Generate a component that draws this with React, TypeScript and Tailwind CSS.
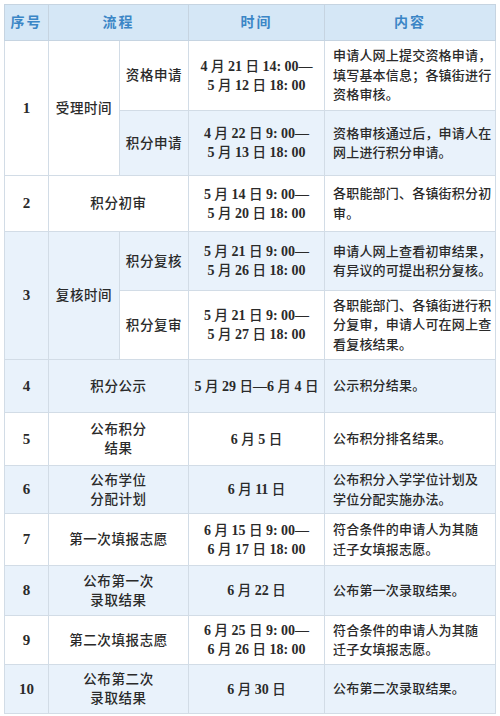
import React from "react";

type Cell = {
  text: string[];
  rowSpan?: number;
  colSpan?: number;
  blue?: boolean;
  kind?: "num" | "name" | "time" | "desc";
};

type Row = { h: string; cells: Cell[] };

const rows: Row[] = [
  {
    h: "h-[70px]",
    cells: [
      { text: ["1"], rowSpan: 2, kind: "num" },
      { text: ["受理时间"], rowSpan: 2 },
      { text: ["资格申请"] },
      { text: ["4 月 21 日 14: 00—", "5 月 12 日 18: 00"], kind: "time" },
      { text: ["申请人网上提交资格申请，", "填写基本信息；各镇街进行", "资格审核。"], kind: "desc" },
    ],
  },
  {
    h: "h-[65px]",
    cells: [
      { text: ["积分申请"], blue: true },
      { text: ["4 月 22 日 9: 00—", "5 月 13 日 18: 00"], blue: true, kind: "time" },
      { text: ["资格审核通过后，申请人在", "网上进行积分申请。"], blue: true, kind: "desc" },
    ],
  },
  {
    h: "h-[56px]",
    cells: [
      { text: ["2"], kind: "num" },
      { text: ["积分初审"], colSpan: 2 },
      { text: ["5 月 14 日 9: 00—", "5 月 20 日 18: 00"], kind: "time" },
      { text: ["各职能部门、各镇街积分初", "审。"], kind: "desc" },
    ],
  },
  {
    h: "h-[59px]",
    cells: [
      { text: ["3"], rowSpan: 2, blue: true, kind: "num" },
      { text: ["复核时间"], rowSpan: 2, blue: true },
      { text: ["积分复核"], blue: true },
      { text: ["5 月 21 日 9: 00—", "5 月 26 日 18: 00"], blue: true, kind: "time" },
      { text: ["申请人网上查看初审结果，", "有异议的可提出积分复核。"], blue: true, kind: "desc" },
    ],
  },
  {
    h: "h-[69px]",
    cells: [
      { text: ["积分复审"] },
      { text: ["5 月 21 日 9: 00—", "5 月 27 日 18: 00"], kind: "time" },
      { text: ["各职能部门、各镇街进行积", "分复审，申请人可在网上查", "看复核结果。"], kind: "desc" },
    ],
  },
  {
    h: "h-[53px]",
    cells: [
      { text: ["4"], blue: true, kind: "num" },
      { text: ["积分公示"], colSpan: 2, blue: true },
      { text: ["5 月 29 日—6 月 4 日"], blue: true, kind: "time" },
      { text: ["公示积分结果。"], blue: true, kind: "desc" },
    ],
  },
  {
    h: "h-[53px]",
    cells: [
      { text: ["5"], kind: "num" },
      { text: ["公布积分", "结果"], colSpan: 2 },
      { text: ["6 月 5 日"], kind: "time" },
      { text: ["公布积分排名结果。"], kind: "desc" },
    ],
  },
  {
    h: "h-[48px]",
    cells: [
      { text: ["6"], blue: true, kind: "num" },
      { text: ["公布学位", "分配计划"], colSpan: 2, blue: true },
      { text: ["6 月 11 日"], blue: true, kind: "time" },
      { text: ["公布积分入学学位计划及", "学位分配实施办法。"], blue: true, kind: "desc" },
    ],
  },
  {
    h: "h-[52px]",
    cells: [
      { text: ["7"], kind: "num" },
      { text: ["第一次填报志愿"], colSpan: 2 },
      { text: ["6 月 15 日 9: 00—", "6 月 17 日 18: 00"], kind: "time" },
      { text: ["符合条件的申请人为其随", "迁子女填报志愿。"], kind: "desc" },
    ],
  },
  {
    h: "h-[50px]",
    cells: [
      { text: ["8"], blue: true, kind: "num" },
      { text: ["公布第一次", "录取结果"], colSpan: 2, blue: true },
      { text: ["6 月 22 日"], blue: true, kind: "time" },
      { text: ["公布第一次录取结果。"], blue: true, kind: "desc" },
    ],
  },
  {
    h: "h-[49px]",
    cells: [
      { text: ["9"], kind: "num" },
      { text: ["第二次填报志愿"], colSpan: 2 },
      { text: ["6 月 25 日 9: 00—", "6 月 26 日 18: 00"], kind: "time" },
      { text: ["符合条件的申请人为其随", "迁子女填报志愿。"], kind: "desc" },
    ],
  },
  {
    h: "h-[49px]",
    cells: [
      { text: ["10"], blue: true, kind: "num" },
      { text: ["公布第二次", "录取结果"], colSpan: 2, blue: true },
      { text: ["6 月 30 日"], blue: true, kind: "time" },
      { text: ["公布第二次录取结果。"], blue: true, kind: "desc" },
    ],
  },
];

const kindClass: Record<string, string> = {
  num: "text-center text-[15px] font-bold",
  name: "text-center text-[13.5px] leading-[19px] tracking-[0.6px] font-medium",
  time: "text-center text-[14px] leading-[19px]",
  desc: "text-left pl-[8px] text-[13px] leading-[19.5px] tracking-[0.2px] font-medium",
};

// digits in the time column are bold, the 月/日 characters stay regular
function TimeLine({ line }: { line: string }) {
  return (
    <>
      {line.split(/([月日])/).map((part, i) =>
        part === "月" || part === "日" ? (
          <span key={i} className="font-medium text-[13.5px]">
            {part}
          </span>
        ) : (
          <span key={i} className="font-bold">
            {part}
          </span>
        ),
      )}
    </>
  );
}

export default function App() {
  return (
    <div
      className="w-[500px] h-[716px] overflow-hidden bg-white pt-[4px] pl-[4px] text-[#2a2a2a]"
      style={{ fontFamily: '"Liberation Serif", "Noto Sans CJK SC", serif' }}
    >
      <table className="w-[491px] table-fixed border-collapse border border-dotted border-[#b9c9d8]">
        <colgroup>
          <col className="w-[44px]" />
          <col className="w-[71px]" />
          <col className="w-[69px]" />
          <col className="w-[136px]" />
          <col className="w-[171px]" />
        </colgroup>
        <thead>
          <tr className="h-[36px] bg-[#d5e7f6] text-[#3b86c6] text-[14px] tracking-[2px]">
            <th className="border border-[#c6d4e1] font-semibold">序号</th>
            <th colSpan={2} className="border border-[#c6d4e1] font-semibold">
              流程
            </th>
            <th className="border border-[#c6d4e1] font-semibold">时间</th>
            <th className="border border-[#c6d4e1] font-semibold">内容</th>
          </tr>
        </thead>
        <tbody>
          {rows.map((r, i) => (
            <tr key={i} className={r.h}>
              {r.cells.map((c, j) => (
                <td
                  key={j}
                  rowSpan={c.rowSpan}
                  colSpan={c.colSpan}
                  className={`border border-[#d2dce6] p-0 align-middle ${
                    c.blue ? "bg-[#e9f2fb]" : "bg-white"
                  } ${kindClass[c.kind ?? "name"]}`}
                >
                  {c.text.map((t, k) => (
                    <div key={k} className="whitespace-nowrap">
                      {c.kind === "time" ? <TimeLine line={t} /> : t}
                    </div>
                  ))}
                </td>
              ))}
            </tr>
          ))}
        </tbody>
      </table>
    </div>
  );
}
